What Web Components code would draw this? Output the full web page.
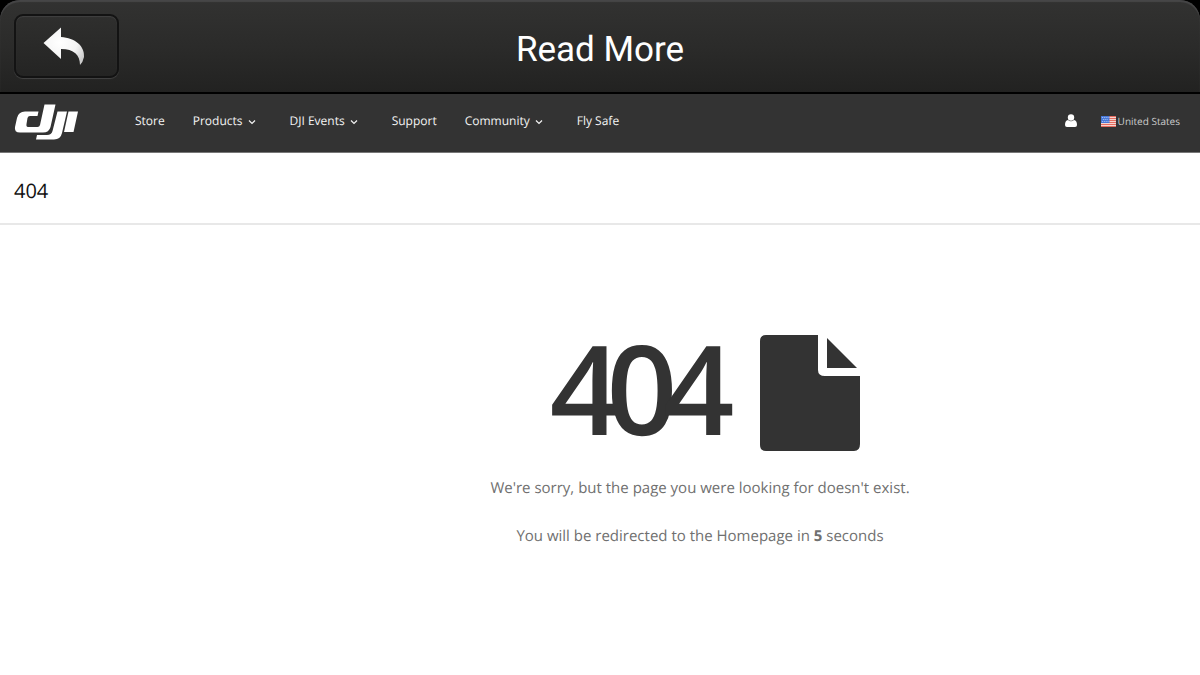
<!DOCTYPE html>
<html lang="en">
<head>
<meta charset="utf-8">
<meta name="viewport" content="width=device-width, initial-scale=1">
<title>Read More</title>
<style>
body { margin: 0; background: #fff; font-family: "Open Sans", "Noto Sans", sans-serif; text-rendering: geometricPrecision; }
</style>
</head>
<body>
<app-bar>Read More</app-bar>
<site-nav>
  <nav-item>Store</nav-item>
  <nav-item menu>Products</nav-item>
  <nav-item menu>DJI Events</nav-item>
  <nav-item>Support</nav-item>
  <nav-item menu>Community</nav-item>
  <nav-item>Fly Safe</nav-item>
  <region-link slot="tools">United States</region-link>
</site-nav>
<page-heading>404</page-heading>
<error-message code="404">
  We're sorry, but the page you were looking for doesn't exist.
  <span slot="redirect">You will be redirected to the Homepage in <b>5</b> seconds</span>
</error-message>
<script>
function define(name, html) {
  const template = document.createElement('template');
  template.innerHTML = html;
  customElements.define(name, class extends HTMLElement {
    constructor() {
      super();
      this.attachShadow({ mode: 'open' }).append(template.content.cloneNode(true));
    }
    connectedCallback() {
      const code = this.shadowRoot.querySelector('[data-code]');
      if (code) code.textContent = this.getAttribute('code');
    }
  });
}

define('app-bar', `
<style>
:host { display: block; background: #000; border-bottom: 2px solid #000; color: #fff; font-family: Roboto, sans-serif; }
header {
  display: grid; grid-template-columns: 1fr auto 1fr; align-items: center;
  box-sizing: border-box; height: 92px; padding: 0 14px;
  border-radius: 20px 20px 0 0;
  background: linear-gradient(#323231, #2b2b2a 50%, #222221);
  box-shadow: inset 0 2px 1px #464647;
}
h1 { margin: 0; padding-top: 8px; font-size: 35px; line-height: 42px; font-weight: 400; }
button {
  width: 105px; height: 64px; padding: 0 8px 0 0; display: grid; place-items: center;
  border: 2px solid #131313; border-radius: 9px;
  background: linear-gradient(#2f2f2e, #242423);
  box-shadow: 0 1px 1px #444, inset 0 1px 1px #414141;
}
svg { display: block; }
</style>
<header>
  <button type="button" aria-label="Back">
    <svg width="54" height="50" viewBox="36 20 54 50" aria-hidden="true">
      <defs><radialGradient id="g" cx=".4" cy=".4" r=".7"><stop offset="0" stop-color="#fff"/><stop offset=".6" stop-color="#f4f4f4"/><stop offset="1" stop-color="#ccc"/></radialGradient></defs>
      <path fill="url(#g)" d="M43.500 42 61 26.500V36C75 37 85 45 84 56Q83 61 80 64C80 54 74 48 61 48V58Z"/>
    </svg>
  </button>
  <h1><slot></slot></h1>
</header>`);

define('site-nav', `
<style>
:host { display: flex; align-items: center; box-sizing: border-box; height: 59px; padding: 0 20px 4px 14px; background: #333; border-bottom: 1px solid #777; color: #eee; }
a { display: block; color: #fff; }
svg { display: block; }
.home { margin-right: 56px; padding-top: 2px; }
nav { display: flex; gap: 28px; }
.tools { display: flex; align-items: center; gap: 24px; margin-left: auto; }
</style>
<a class="home" href="#" aria-label="DJI home">
  <svg width="65" height="36" viewBox="14 104 65 36" fill="currentColor" aria-hidden="true">
    <path d="M44.500 104.500H55.500L50.500 127Q49 132.500 43 132.500H20Q14 132.500 15 127L17 118Q18.500 111.500 25 111.500H38.500L37.500 116H30Q28 116 27.500 118L26.500 124Q26 127 28 127H37.500Q39.500 127 40 125Z"/>
    <path d="M57.500 111.500H67L62 133Q60.500 139.500 54 139.500H36L37 135H47Q51.500 135 52.500 131Z"/>
    <path d="M68.500 111.500H78L73.500 132H64Z"/>
  </svg>
</a>
<nav><slot></slot></nav>
<div class="tools">
  <a href="#" aria-label="Account">
    <svg width="12" height="14" viewBox="0 0 12 14" fill="currentColor" aria-hidden="true"><circle cx="6" cy="3.500" r="3.200"/><path d="M3 6Q6 8.500 9 6Q12 6.500 12 11Q12 13 10 13H2Q0 13 0 11Q0 6.500 3 6Z"/></svg>
  </a>
  <slot name="tools"></slot>
</div>`);

define('nav-item', `
<style>
:host { display: block; }
a { display: flex; align-items: center; color: #f4f4f4; font-size: 12px; line-height: 18px; text-decoration: none; white-space: nowrap; }
svg { display: none; margin: 2px 6px 0 5px; }
:host([menu]) svg { display: block; }
</style>
<a href="#"><slot></slot><svg width="8" height="6" viewBox="0 0 8 6" fill="none" stroke="currentColor" stroke-width="1.200" aria-hidden="true"><path d="M1 1.500 4 4.500 7 1.500"/></svg></a>`);

define('region-link', `
<style>
:host { display: block; }
a { display: flex; align-items: center; gap: 2px; color: #ccc; font-size: 10px; line-height: 14px; text-decoration: none; white-space: nowrap; }
svg { display: block; }
</style>
<a href="#">
  <svg width="15" height="11" viewBox="0 0 16 11" preserveAspectRatio="none" aria-hidden="true">
    <rect width="16" height="11" fill="#f4d5d0"/>
    <path stroke="#e4685c" d="M0 .5H16M0 2.500H16M0 4.500H16M0 6.500H16M0 8.500H16M0 10.500H16"/>
    <rect width="9" height="7" fill="#4777d8"/>
    <path stroke="#b4cbf5" stroke-dasharray="1 1" d="M1 1.500H8M2 3.500H8M1 5.500H8"/>
  </svg>
  <slot></slot>
</a>`);

define('page-heading', `
<style>
:host { display: block; padding: 25px 14px 19px; border-bottom: 2px solid #e8e8e8; color: #111; }
h2 { margin: 0; font-size: 20px; line-height: 26px; font-weight: 400; }
</style>
<h2><slot></slot></h2>`);

define('error-message', `
<style>
:host { display: block; padding: 109px 0 40px 200px; color: #707070; text-align: center; font-size: 15px; line-height: 24px; }
.code { display: flex; justify-content: center; align-items: flex-start; gap: 40px; padding-left: 10px; color: #333; }
strong { font-size: 124px; line-height: 108px; font-weight: 600; letter-spacing: -14px; }
svg { display: block; }
p { margin: 24px 0 0; }
</style>
<div class="code">
  <strong data-code></strong>
  <svg width="100" height="118" viewBox="0 0 100 118" fill="currentColor" aria-hidden="true">
    <path d="M6 1H58V36Q58 42 65 42H100V110Q100 117 94 117H6Q0 117 0 111V7Q0 1 6 1Z"/>
    <path d="M67 4 97 34H67Z"/>
  </svg>
</div>
<p><slot></slot></p>
<p><slot name="redirect"></slot></p>`);
</script>
</body>
</html>
